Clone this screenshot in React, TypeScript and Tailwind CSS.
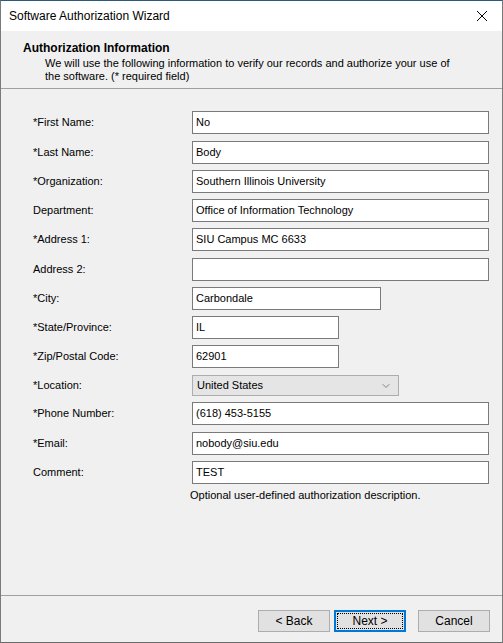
import { ChevronDown } from 'lucide-react';

type Row = { label: string; value: string; w: string; mb: string; select?: boolean };

const fields: Row[] = [
  { label: '*First Name:', value: 'No', w: 'w-[297px]', mb: 'mb-[7px]' },
  { label: '*Last Name:', value: 'Body', w: 'w-[297px]', mb: 'mb-[6px]' },
  { label: '*Organization:', value: 'Southern Illinois University', w: 'w-[297px]', mb: 'mb-[6px]' },
  { label: 'Department:', value: 'Office of Information Technology', w: 'w-[297px]', mb: 'mb-[6px]' },
  { label: '*Address 1:', value: 'SIU Campus MC 6633', w: 'w-[297px]', mb: 'mb-[7px]' },
  { label: 'Address 2:', value: '', w: 'w-[297px]', mb: 'mb-[6px]' },
  { label: '*City:', value: 'Carbondale', w: 'w-[189px]', mb: 'mb-[6px]' },
  { label: '*State/Province:', value: 'IL', w: 'w-[147px]', mb: 'mb-[6px]' },
  { label: '*Zip/Postal Code:', value: '62901', w: 'w-[147px]', mb: 'mb-[7px]' },
  { label: '*Location:', value: 'United States', w: 'w-[207px]', mb: 'mb-[6px]', select: true },
  { label: '*Phone Number:', value: '(618) 453-5155', w: 'w-[297px]', mb: 'mb-[7px]' },
  { label: '*Email:', value: 'nobody@siu.edu', w: 'w-[297px]', mb: 'mb-[6px]' },
  { label: 'Comment:', value: 'TEST', w: 'w-[297px]', mb: 'mb-[3px]' },
];

function Field({ label, value, w, mb, select }: Row) {
  return (
    <div className={`flex items-center ${select ? 'h-[21px]' : 'h-[23px]'} ${mb}`}>
      <span className="w-[191px] shrink-0 pl-[32px] text-[11px] text-black">{label}</span>
      {select ? (
        <div
          className={`${w} h-[21px] bg-[#e5e5e5] border border-[#adadad] flex items-center justify-between pl-[4px] pr-[6px] text-[11px]`}
        >
          <span>{value}</span>
          <ChevronDown className="w-[12px] h-[12px] text-[#606060]" strokeWidth={1.5} />
        </div>
      ) : (
        <div
          className={`${w} h-[23px] bg-white border border-[#7a7a7a] flex items-center pl-[3px] text-[11px] text-black`}
        >
          {value}
        </div>
      )}
    </div>
  );
}

export default function App() {
  return (
    <div
      className="w-[503px] h-[643px] flex flex-col bg-[#f0f0f0] border border-t-[#2b5a7d] border-x-[#7a7a7a] border-b-[#6a6a6a] overflow-hidden"
      style={{ fontFamily: '"Liberation Sans", Arial, sans-serif' }}
    >
      {/* title bar */}
      <div className="h-[30px] bg-white flex items-center justify-between pl-[8px] pr-[14px] shrink-0">
        <span className="text-[12px] text-black">Software Authorization Wizard</span>
        <svg width="12" height="12" viewBox="0 0 12 12" className="text-black">
          <path d="M1 1 L11 11 M11 1 L1 11" stroke="currentColor" strokeWidth="1" />
        </svg>
      </div>

      {/* header */}
      <div className="h-[58px] shrink-0 border-b border-[#a0a0a0] pt-[10px] pl-[22px]">
        <div className="text-[12px] font-bold text-black leading-[15px]">Authorization Information</div>
        <div className="mt-[1px] pl-[22px] pr-[40px] text-[11px] leading-[13px] text-black">
          We will use the following information to verify our records and authorize your use of the software. (* required field)
        </div>
      </div>

      {/* form */}
      <div className="flex-1 pt-[22px] border-b border-[#a0a0a0]">
        {fields.map((f) => (
          <Field key={f.label} {...f} />
        ))}
        <div className="pl-[189px] text-[11px] text-black">
          Optional user-defined authorization description.
        </div>
      </div>

      {/* buttons */}
      <div className="h-[46px] shrink-0 flex items-start justify-end pt-[14px] pr-[12px] text-[12px]">
        <button className="w-[72px] h-[22px] bg-[#e1e1e1] border border-[#adadad] text-black">&lt; Back</button>
        <button className="ml-[4px] w-[72px] h-[22px] bg-[#e1e1e1] border-2 border-[#0078d7] p-[1px] text-black">
          <span className="flex items-center justify-center w-full h-full border border-dotted border-black">Next &gt;</span>
        </button>
        <button className="ml-[12px] w-[72px] h-[22px] bg-[#e1e1e1] border border-[#adadad] text-black">Cancel</button>
      </div>
    </div>
  );
}
